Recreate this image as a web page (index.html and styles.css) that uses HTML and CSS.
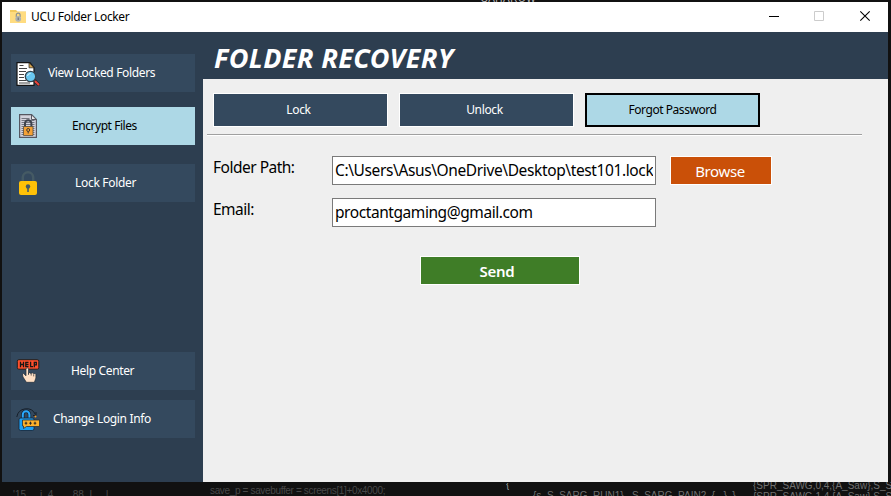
FILE: index.html
```html
<!DOCTYPE html>
<html lang="en">
<head>
<meta charset="utf-8">
<title>UCU Folder Locker</title>
<link rel="stylesheet" href="styles.css">
</head>
<body>
<div class="desktop">
  <div class="code code-top">SAHAROW</div>
  <main class="window">
    <header class="titlebar">
      <svg class="app-icon" width="16" height="16" viewBox="0 0 16 16"><path d="M0 1h6l1.500 1.500H16V14H0z" fill="#f3c95d"/><path d="M0 3h16v11H0z" fill="#ffdc80"/><path d="M6.300 8V6a1.900 1.900 0 0 1 3.800 0v2" fill="none" stroke="#8d918f" stroke-width="1.200"/><circle cx="8.200" cy="9.800" r="2.900" fill="#aeb2b3"/><path d="M8.200 8.500v2.500" stroke="#686d70"/></svg>
      <span class="app-name">UCU Folder Locker</span>
      <svg class="controls" width="138" height="30" viewBox="0 0 138 30"><path d="M19 14.500h10" stroke="#000"/><path d="M64.500 9.500h9v9h-9z" fill="none" stroke="#ccc"/><path d="M110.300 9.300l9.400 9.400m0-9.400l-9.400 9.400" stroke="#000" stroke-width="1.100"/></svg>
    </header>
    <div class="body">
      <nav class="sidebar">
        <button class="item view"><svg width="24" height="24" viewBox="0 0 24 24"><path d="M1 .6h13l4 5v17.800H1z" fill="#fff" stroke="#151515" stroke-width="1.200"/><path d="M13 .8v5h5z" fill="#d6a34b" stroke="#222" stroke-width=".7"/><path d="M3.500 3.500h4M3 6.500h8M3 9.500h7M3 12.500h5M3 15.500h5M3 18.500h7M3 21h11" stroke="#444"/><path d="M18.500 18.500l3.800 3.800" stroke="#222" stroke-width="3.200" stroke-linecap="round"/><path d="M19.500 19.500l3 3" stroke="#e9433a" stroke-width="2" stroke-linecap="round"/><circle cx="14.500" cy="14.500" r="5.200" fill="#69c8f1" stroke="#37454f" stroke-width="1.300"/><path d="M11.500 14a3 3 0 0 1 3-2.500" stroke="#d9f4ff" fill="none"/></svg><span>View Locked Folders</span></button>
        <button class="item encrypt"><svg width="24" height="24" viewBox="0 0 24 24"><path d="M3.600.6h12l4.800 4.800v18H3.600z" fill="#d3d3dd" stroke="#555761" stroke-width="1.200"/><path d="M15.500.8v4.700h4.700z" fill="#eee" stroke="#555761"/><path d="M5.500 4.500h8M5.500 6.500h13M5.500 8.500h13M5.500 10.500h13M5.500 12.500h13M5.500 14.500h13M5.500 16.500h13M5.500 18.500h13M5.500 20.500h13" stroke="#696b75" stroke-width=".9"/><path d="M9 13V9.500a3.200 3.200 0 0 1 6.400 0V13" fill="none" stroke="#3f434c" stroke-width="2"/><path d="M7.500 12.500h9.500v9H7.500z" fill="#f4a135" stroke="#5b513f" stroke-width=".8"/><circle cx="12.200" cy="16" r="1.500" fill="#f4a135" stroke="#443b30"/><path d="M12.200 17.500v2" stroke="#443b30"/></svg><span>Encrypt Files</span></button>
        <button class="item lock"><svg width="24" height="24" viewBox="0 0 24 24"><path d="M6.800 11V6.500a5.200 5.200 0 0 1 10.400 0V11" fill="none" stroke="#455a64" stroke-width="2.500"/><rect x="3" y="10" width="18" height="14" rx="2" fill="#ffc107"/><circle cx="12" cy="15.500" r="2.200" fill="#455a64"/><path d="M12 16v5" stroke="#455a64" stroke-width="1.600"/></svg><span>Lock Folder</span></button>
        <button class="item help"><svg width="24" height="24" viewBox="0 0 24 24"><rect x="1.300" y=".7" width="21.500" height="9.500" rx="1.500" fill="#ff4f2b" stroke="#202020"/><path d="M4.500 2.800v5.400M7.500 2.800v5.400M4.500 5.500h3M12.500 3.400h-2.700v4.200h2.700M9.800 5.500h2.700M14.600 2.800v4.800h2.400M18.300 8.200V3.400h2v2.500h-2" fill="none" stroke="#171717" stroke-width="1.300"/><path d="M10 10.500c.2-2.200 2.500-2.200 2.500 0v4l1-.8 1.500.8 1.300-.7 1.400 1 1.200-.3 1 1V19l-1.500 4.300h-8L7 18l-.6-3 1.200-.4 2.400 2.200z" fill="#ffe0c5" stroke="#1e2b38" stroke-width=".7"/><path d="M12.500 14v2m2.700-1.400v2m2.500-1.200v2" stroke="#292c31" stroke-width=".7"/></svg><span>Help Center</span></button>
        <button class="item login"><svg width="24" height="24" viewBox="0 0 24 24"><path d="M.8 10a9.800 9.800 0 0 1 18.600-2.500M20 5v3.500h-3" fill="none" stroke="#17202a"/><path d="M6.800 12V7.500a3.300 3.300 0 0 1 6.600 0V12" fill="none" stroke="#172536" stroke-width="3.500"/><path d="M6.800 12V7.500a3.300 3.300 0 0 1 6.600 0V12" fill="none" stroke="#2aaaff" stroke-width="2"/><rect x="3" y="11" width="15" height="12.500" rx="1.800" fill="#1ca0f5" stroke="#172536" stroke-width=".8"/><path d="M6.500 13h17v6.500h-13l-3 2V19h-1z" fill="#ffb12b" stroke="#26323b" stroke-width=".8"/><path d="M10 14.700v3m-1.300-1.500h2.600M14.500 14.700v3m-1.300-1.500h2.600M19 14.700v3m-1.300-1.500h2.600" stroke="#262728"/><circle cx="19.500" cy="9.500" r="1" fill="#ff9d24"/></svg><span>Change Login Info</span></button>
      </nav>
      <section class="content">
        <h1><span>FOLDER RECOVERY</span></h1>
        <div class="tabs">
          <button class="tab">Lock</button>
          <button class="tab">Unlock</button>
          <button class="tab active">Forgot Password</button>
        </div>
        <hr>
        <div class="row"><label>Folder Path:</label><div class="field path"><span>C:\Users\Asus\OneDrive\Desktop\test101.locked</span></div><button class="browse">Browse</button></div>
        <div class="row"><label>Email:</label><div class="field mail"><span>proctantgaming@gmail.com</span></div></div>
        <button class="send">Send</button>
      </section>
    </div>
  </main>
  <div class="code code-a">save_p = savebuffer = screens[1]+0x4000;</div>
  <div class="code code-b">{</div>
  <div class="code code-c">{s, S_SARG_RUN1},&nbsp; S_SARG_PAIN2, {...}, }</div>
  <div class="code code-d">{SPR_SAWG,0,4,{A_Saw},S_SAWW<br>{SPR_SAWG,1,4,{A_Saw},S_SAWW</div>
  <div class="code code-e">'15,&nbsp; _i ,4 &nbsp; ,_ 88, L&nbsp; &nbsp; l</div>
</div>
</body>
</html>
```
FILE: styles.css
```css
* { box-sizing: border-box; }
body { margin: 0; overflow: hidden; font-family: "Noto Sans", sans-serif; }
button { border: 0; border-radius: 0; padding: 0; font: inherit; white-space: nowrap; }
.desktop { position: relative; width: 891px; height: 496px; padding: 2px 3px 14px 2px; background: #111; overflow: hidden; }
.window { width: 886px; height: 480px; background: #efefef; }
.titlebar { height: 30px; background: #fff; display: flex; align-items: center; padding-left: 8px; }
.app-icon { display: block; }
.app-name { margin-left: 5px; font-size: 12px; letter-spacing: -.36px; line-height: 16px; }
.controls { margin-left: auto; }
.body { display: flex; height: 450px; }
.sidebar { width: 201px; background: #2d3e50; padding: 22px 8px 0 9px; }
.item { display: flex; align-items: center; width: 184px; height: 38px; padding-left: 5px; background: #34495e; color: #fff; font-size: 12px; letter-spacing: -.35px; }
.item svg { display: block; flex: none; }
.item span { padding-bottom: 2px; }
.view svg { margin-top: 2px; }
.encrypt { margin-top: 15px; background: #add8e6; color: #000; }
.lock { margin-top: 19px; }
.help { margin-top: 150px; }
.login { margin-top: 10px; }
.view span { margin-left: 8px; }
.encrypt span { margin-left: 32px; letter-spacing: -.45px; }
.lock span { margin-left: 35px; letter-spacing: -.3px; }
.help span { margin-left: 31px; }
.login span { margin-left: 13px; }
.content { width: 685px; }
h1 { margin: 0; height: 47px; padding-left: 11px; background: #2d3e50; color: #fff; font-size: 27px; line-height: 52px; font-style: italic; font-weight: 700; letter-spacing: .35px; white-space: nowrap; }
.tabs { display: flex; gap: 11px; padding: 14px 0 0 10px; }
.tab { width: 175px; height: 34px; padding: 0 4px 2px 0; border: 1px solid #fff; background: #34495e; color: #fff; font-size: 12px; letter-spacing: -.35px; }
.tab.active { padding-right: 0; border: 2px solid #000; background: #add8e6; color: #000; letter-spacing: -.45px; }
hr { width: 655px; height: 2px; margin: 7px 0 20px 4px; border: 0; border-top: 1px solid #a0a0a0; background: #fff; }
.row { display: flex; height: 29px; margin: 0 0 13px 10px; }
label { width: 119px; font-size: 15.500px; line-height: 23px; letter-spacing: -.5px; }
.field { width: 324px; border: 1px solid #7a7a7a; background: #fff; padding: 0 2px; font-size: 15.500px; line-height: 27px; letter-spacing: -.38px; white-space: nowrap; }
.field span { display: block; overflow: hidden; height: 27px; }
.mail { letter-spacing: -.43px; }
.browse { width: 102px; margin-left: 14px; border: 1px solid #fff; background: #ca5008; color: #fff; font-size: 15px; letter-spacing: -.4px; padding: 0 2px 0 0; }
.send { display: block; width: 160px; height: 29px; margin: 29px 0 0 217px; border: 1px solid #fff; background: #3f7d27; color: #fff; font-size: 15px; font-weight: 600; letter-spacing: -.3px; padding: 0 6px 0 0; }
.code { position: absolute; color: #484848; font-family: "Liberation Sans", sans-serif; font-size: 10px; line-height: 10px; white-space: pre; }
.code-top { left: 481px; top: -6px; height: 8px; overflow: hidden; color: #b9b9b9; letter-spacing: .5px; }
.code-a { left: 210px; top: 486px; letter-spacing: -.35px; }
.code-b { left: 506px; top: 480px; clip-path: inset(3px 0 0); color: #999; }
.code-c { left: 533px; top: 491px; color: #707070; }
.code-d { left: 753px; top: 480px; line-height: 11px; clip-path: inset(2px 0 0); color: #707070; }
.code-e { left: 13px; top: 490px; }
```
